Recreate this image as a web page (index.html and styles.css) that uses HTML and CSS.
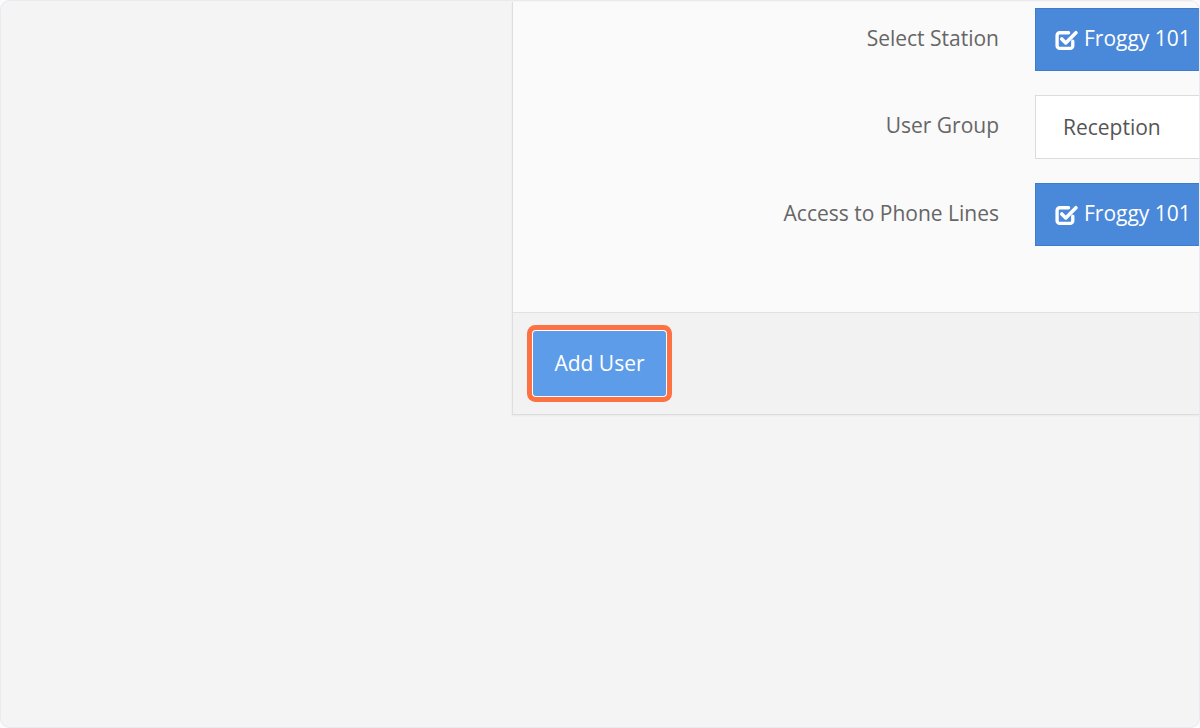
FILE: index.html
```html
<!DOCTYPE html>
<html>
<head>
<meta charset="utf-8">
<link rel="stylesheet" href="styles.css">
</head>
<body>
<div class="frame">
  <div class="spacer"></div>
  <div class="panel">
    <div class="form">
      <div class="row">
        <div class="label">Select Station</div>
        <div class="btn-check">
          <svg class="chk" viewBox="0 0 22 22" width="23" height="23"><path d="M17 12.5V17a2.5 2.5 0 0 1-2.5 2.5h-10A2.5 2.5 0 0 1 2 17V7a2.5 2.5 0 0 1 2.5-2.5H13" fill="none" stroke="#fff" stroke-width="3.2" stroke-linecap="round"/><path d="M6.5 10.5l3.8 3.8L20 4.5" fill="none" stroke="#fff" stroke-width="3.4" stroke-linecap="round" stroke-linejoin="round"/></svg>
          <span>Froggy 101</span>
        </div>
      </div>
      <div class="row">
        <div class="label">User Group</div>
        <div class="input">Reception</div>
      </div>
      <div class="row">
        <div class="label">Access to Phone Lines</div>
        <div class="btn-check">
          <svg class="chk" viewBox="0 0 22 22" width="23" height="23"><path d="M17 12.5V17a2.5 2.5 0 0 1-2.5 2.5h-10A2.5 2.5 0 0 1 2 17V7a2.5 2.5 0 0 1 2.5-2.5H13" fill="none" stroke="#fff" stroke-width="3.2" stroke-linecap="round"/><path d="M6.5 10.5l3.8 3.8L20 4.5" fill="none" stroke="#fff" stroke-width="3.4" stroke-linecap="round" stroke-linejoin="round"/></svg>
          <span>Froggy 101</span>
        </div>
      </div>
    </div>
    <div class="footer">
      <button class="add">Add User</button>
    </div>
  </div>
</div>
</body>
</html>
```

FILE: styles.css
```css
html, body {
  margin: 0;
  padding: 0;
  background: #fbfafc;
}
body {
  font-family: "Open Sans", "Noto Sans", sans-serif;
}
.frame {
  width: 1200px;
  height: 728px;
  box-sizing: border-box;
  border: 1px solid #ebe9f0;
  border-radius: 10px;
  background: #f4f4f4;
  overflow: hidden;
  display: flex;
  align-items: flex-start;
}
.spacer {
  width: 511px;
  flex: none;
}
.panel {
  flex: none;
  width: 760px;
  margin-top: 1px;
  border-left: 1px solid #dedede;
  border-bottom: 1px solid #dcdcdc;
  box-shadow: 0 1px 2px rgba(0,0,0,0.05);
}
.form {
  background: #fafafa;
  padding: 6px 0 67px 0;
  display: flex;
  flex-direction: column;
  gap: 25.5px;
}
.row {
  display: flex;
  align-items: center;
  gap: 36px;
  height: 62px;
}
.label {
  width: 486px;
  text-align: right;
  font-size: 21px;
  color: #666;
  padding-bottom: 3px;
}
.btn-check {
  box-sizing: border-box;
  width: 200px;
  height: 63px;
  background: #4a88da;
  border: 1px solid #3d7bcf;
  color: #fff;
  display: flex;
  align-items: center;
  padding-left: 19px;
  gap: 6px;
  font-size: 21px;
}
.btn-check span {
  padding-bottom: 2px;
}
.chk {
  flex: none;
}
.input {
  box-sizing: border-box;
  width: 200px;
  height: 64px;
  background: #fff;
  border: 1px solid #dcdcdc;
  color: #555;
  font-size: 21px;
  display: flex;
  align-items: center;
  padding-left: 27px;
}
.footer {
  border-top: 1px solid #e2e2e2;
  background: #f2f2f2;
  padding: 18px 20px 18px 20px;
  display: flex;
}
.add {
  width: 133px;
  height: 65px;
  border: none;
  border-radius: 3px;
  background: #5c9ce9;
  color: #fff;
  font-family: "Open Sans", "Noto Sans", sans-serif;
  font-size: 21px;
  box-shadow: 0 0 0 1px #ffffff, 0 0 0 6px #fe7142;
  padding: 0 0 2px 0;
}
```
